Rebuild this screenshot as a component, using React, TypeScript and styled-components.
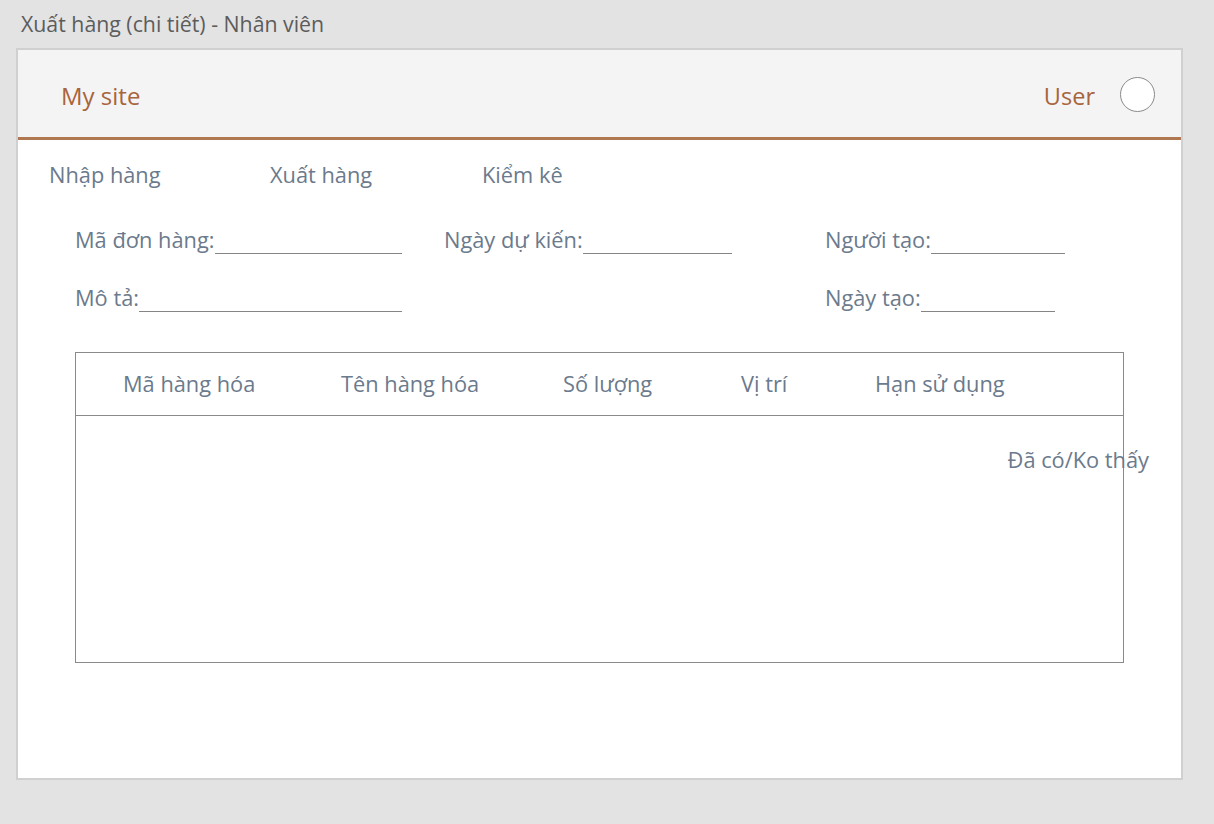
import styled, { createGlobalStyle } from 'styled-components'

const TEXT = '#6b7a8c'
const BRAND = '#a8643c'

const GlobalStyle = createGlobalStyle`
    html, body {
        margin: 0;
        padding: 0;
        background: #e3e3e3;
        font-family: 'Open Sans', 'Noto Sans', sans-serif;
    }
`

interface FieldProps {
    label: string
    width: number
}

function Field({ label, width }: FieldProps) {
    return <FieldBox $width={width}>
        <FieldLabel>{label}</FieldLabel>
        <FieldLine />
    </FieldBox>
}

const COLUMNS = ['Mã hàng hóa', 'Tên hàng hóa', 'Số lượng', 'Vị trí', 'Hạn sử dụng']

export default function App() {
    return <Page>
        <GlobalStyle />
        <PageTitle>Xuất hàng (chi tiết) - Nhân viên</PageTitle>
        <Panel>
            <Header>
                <SiteName>My site</SiteName>
                <UserBox>
                    <UserName>User</UserName>
                    <Avatar />
                </UserBox>
            </Header>
            <Nav>
                <NavItem>Nhập hàng</NavItem>
                <NavItem>Xuất hàng</NavItem>
                <NavItem>Kiểm kê</NavItem>
            </Nav>
            <Form>
                <Field label='Mã đơn hàng:' width={327} />
                <Field label='Ngày dự kiến:' width={288} />
                <Field label='Người tạo:' width={240} />
                <Field label='Mô tả:' width={327} />
                <span />
                <Field label='Ngày tạo:' width={230} />
            </Form>
            <Table>
                <TableHead>
                    {COLUMNS.map(col => <HeadCell key={col}>{col}</HeadCell>)}
                </TableHead>
                <TableBody>
                    <StatusText>Đã có/Ko thấy</StatusText>
                </TableBody>
            </Table>
        </Panel>
    </Page>
}

const Page = styled.div`
    width: 1214px;
    height: 824px;
    padding: 0 0 0 16px;
    box-sizing: border-box;
`

const PageTitle = styled.div`
    height: 48px;
    padding: 9px 0 0 5px;
    box-sizing: border-box;
    font-size: 21.3px;
    color: #5c5c5c;
`

const Panel = styled.div`
    width: 1167px;
    height: 732px;
    box-sizing: border-box;
    background: #fff;
    border: 2px solid #d0d0d0;
    display: flex;
    flex-direction: column;
`

const Header = styled.div`
    height: 90px;
    flex-shrink: 0;
    box-sizing: border-box;
    background: #f4f4f4;
    border-bottom: 3px solid #b07850;
    display: flex;
    align-items: center;
    justify-content: space-between;
    padding: 4px 26px 0 43px;
`

const SiteName = styled.div`
    font-size: 24px;
    color: ${BRAND};
`

const UserBox = styled.div`
    display: flex;
    align-items: center;
    gap: 25px;
`

const UserName = styled.div`
    font-size: 23.5px;
    color: ${BRAND};
`

const Avatar = styled.div`
    width: 33px;
    height: 33px;
    margin-top: -2px;
    border-radius: 50%;
    border: 1px solid #8a8a8a;
    background: #fff;
`

const Nav = styled.div`
    display: grid;
    grid-template-columns: 221px 212px auto;
    padding: 20px 0 0 31px;
`

const NavItem = styled.div`
    font-size: 21.8px;
    color: ${TEXT};
`

const Form = styled.div`
    display: grid;
    grid-template-columns: 369px 381px auto;
    row-gap: 28px;
    padding: 36px 0 0 57px;
`

const FieldBox = styled.div<{ $width: number }>`
    display: flex;
    align-items: flex-end;
    width: ${p => p.$width + 'px'};
`

const FieldLabel = styled.span`
    font-size: 21.8px;
    line-height: 30px;
    color: ${TEXT};
    white-space: nowrap;
`

const FieldLine = styled.span`
    flex: 1;
    border-bottom: 1px solid #858585;
    margin-bottom: 1px;
`

const Table = styled.div`
    margin: 39px 0 0 57px;
    width: 1049px;
    height: 311px;
    box-sizing: border-box;
    border: 1px solid #8a8a8a;
    display: flex;
    flex-direction: column;
`

const TableHead = styled.div`
    height: 63px;
    flex-shrink: 0;
    box-sizing: border-box;
    border-bottom: 1px solid #8a8a8a;
    display: grid;
    grid-template-columns: 218px 222px 178px 134px auto;
    align-items: center;
    padding: 0 0 2px 47px;
`

const HeadCell = styled.div`
    font-size: 21.8px;
    color: ${TEXT};
`

const TableBody = styled.div`
    display: flex;
    justify-content: flex-end;
    padding-top: 29px;
    margin-right: -26px;
`

const StatusText = styled.div`
    font-size: 21.8px;
    color: ${TEXT};
`
